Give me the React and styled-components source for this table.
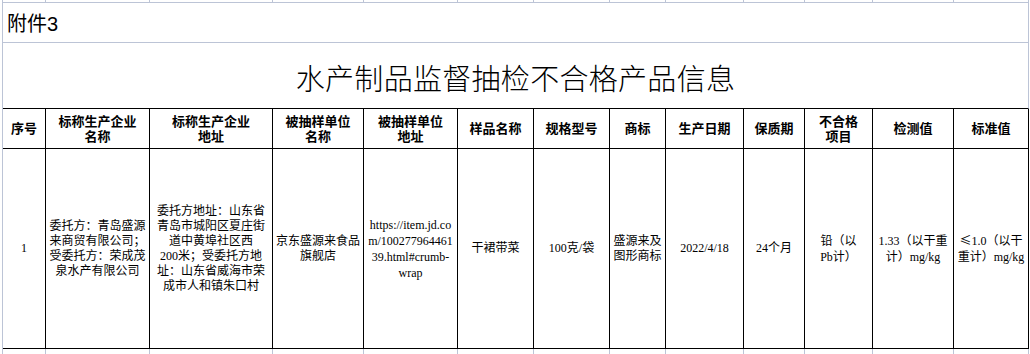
import React from "react";
import styled, { createGlobalStyle } from "styled-components";

const GRID = "#bcc4d6";
const INK = "#000";

const widths = [43, 104, 123, 91, 94, 76, 76, 56, 78, 61, 68, 81, 75];

const GlobalStyle = createGlobalStyle`
  html, body {
    margin: 0;
    padding: 0;
    background: #fff;
    overflow: hidden;
  }
`;

const Sheet = styled.div`
  display: grid;
  grid-template-columns: ${widths.map((w) => `${w}px`).join(" ")};
  grid-template-rows: 3px 40px 66px 40px 200px 8px;
  margin-left: 2px;
  width: max-content;
  border-left: 1px solid ${GRID};
  color: ${INK};
`;

const GapCell = styled.div`
  box-sizing: border-box;
  border-right: 1px solid ${GRID};
  border-bottom: ${(p) => (p.$edge ? `1px solid ${GRID}` : "none")};
`;

const NoteCell = styled.div`
  grid-column: 1 / -1;
  box-sizing: border-box;
  display: flex;
  align-items: center;
  padding-left: 4px;
  border-right: 1px solid ${GRID};
  border-bottom: 1px solid ${GRID};
  font-family: "Liberation Sans", "Noto Sans CJK SC", sans-serif;
  font-size: 20px;
`;

const TitleCell = styled.div`
  grid-column: 1 / -1;
  box-sizing: border-box;
  display: flex;
  align-items: center;
  justify-content: center;
  padding-top: 2px;
  border-right: 1px solid ${GRID};
  border-bottom: 1px solid ${INK};
  font-family: "Noto Sans CJK SC", sans-serif;
  font-size: 29px;
  font-weight: 300;
  letter-spacing: 0.3px;
`;

const HeadCell = styled.div`
  box-sizing: border-box;
  display: flex;
  flex-direction: column;
  align-items: center;
  justify-content: center;
  text-align: center;
  border-right: 1px solid ${INK};
  border-bottom: 1px solid ${INK};
  font-family: "Liberation Serif", "Noto Sans CJK SC", serif;
  font-size: 13px;
  font-weight: 700;
  line-height: 15px;
`;

const DataCell = styled.div`
  box-sizing: border-box;
  display: flex;
  flex-direction: column;
  align-items: center;
  justify-content: center;
  text-align: center;
  white-space: nowrap;
  border-right: 1px solid ${INK};
  border-bottom: 1px solid ${INK};
  font-family: "Liberation Serif", "Noto Sans CJK SC", serif;
  font-size: 12px;
  line-height: ${(p) => p.$lead || 15}px;
`;

// the limit sign is set in the CJK face, as the sheet's Song font does
const Sign = styled.span`
  font-family: "Noto Sans CJK SC", sans-serif;
  font-size: 12px;
`;

const headers = [
  ["序号"],
  ["标称生产企业", "名称"],
  ["标称生产企业", "地址"],
  ["被抽样单位", "名称"],
  ["被抽样单位", "地址"],
  ["样品名称"],
  ["规格型号"],
  ["商标"],
  ["生产日期"],
  ["保质期"],
  ["不合格", "项目"],
  ["检测值"],
  ["标准值"],
];

const row = [
  { lines: ["1"] },
  { lines: ["委托方：青岛盛源", "来商贸有限公司；", "受委托方：荣成茂", "泉水产有限公司"] },
  {
    lines: [
      "委托方地址：山东省",
      "青岛市城阳区夏庄街",
      "道中黄埠社区西",
      "200米；受委托方地",
      "址：山东省威海市荣",
      "成市人和镇朱口村",
    ],
  },
  { lines: ["京东盛源来食品", "旗舰店"] },
  { lines: ["https://item.jd.co", "m/100277964461", "39.html#crumb-", "wrap"], lead: 16 },
  { lines: ["干裙带菜"] },
  { lines: ["100克/袋"] },
  { lines: ["盛源来及", "图形商标"] },
  { lines: ["2022/4/18"] },
  { lines: ["24个月"] },
  { lines: ["铅（以", "Pb计）"], lead: 16 },
  { lines: ["1.33（以干重", "计）mg/kg"], lead: 16 },
  {
    lines: [
      <>
        <Sign>≤</Sign>1.0（以干
      </>,
      "重计）mg/kg",
    ],
    lead: 16,
  },
];

const Lines = ({ lines }) =>
  lines.map((line, i) => <span key={i}>{line}</span>);

export default function App() {
  return (
    <>
      <GlobalStyle />
      <Sheet>
        {widths.map((_, i) => (
          <GapCell key={`top-${i}`} $edge />
        ))}
        <NoteCell>附件3</NoteCell>
        <TitleCell>水产制品监督抽检不合格产品信息</TitleCell>
        {headers.map((lines, i) => (
          <HeadCell key={`h-${i}`}>
            <Lines lines={lines} />
          </HeadCell>
        ))}
        {row.map((cell, i) => (
          <DataCell key={`d-${i}`} $lead={cell.lead}>
            <Lines lines={cell.lines} />
          </DataCell>
        ))}
        {widths.map((_, i) => (
          <GapCell key={`bottom-${i}`} />
        ))}
      </Sheet>
    </>
  );
}
